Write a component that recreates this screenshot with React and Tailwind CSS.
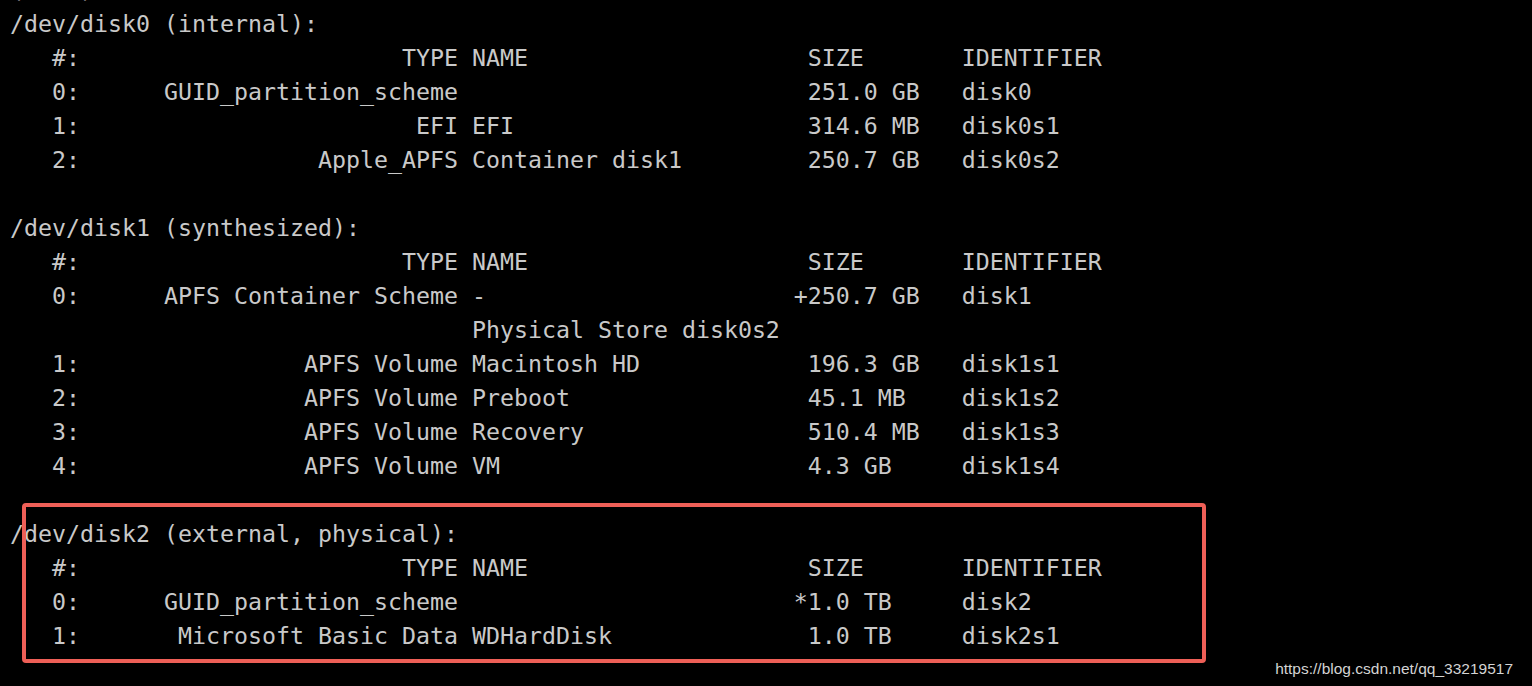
import React from 'react';

const HEAD = '   #:                       TYPE NAME                    SIZE       IDENTIFIER';

// builds one diskutil row on the fixed column grid
const row = (num, type, name, size, id) => {
  const left = ('   ' + num + ':').padEnd(32 - type.length) + type + ' ';
  let s = (left + name).padEnd(56);
  s = s + (size.startsWith('+') || size.startsWith('*') ? size : ' ' + size);
  return s.padEnd(68) + id;
};

const blocks = [
  {
    title: '/dev/disk0 (internal):',
    rows: [
      row(0, 'GUID_partition_scheme', '', '251.0 GB', 'disk0'),
      row(1, 'EFI', 'EFI', '314.6 MB', 'disk0s1'),
      row(2, 'Apple_APFS', 'Container disk1', '250.7 GB', 'disk0s2'),
    ],
  },
  {
    title: '/dev/disk1 (synthesized):',
    rows: [
      row(0, 'APFS Container Scheme', '-', '+250.7 GB', 'disk1'),
      ' '.repeat(33) + 'Physical Store disk0s2',
      row(1, 'APFS Volume', 'Macintosh HD', '196.3 GB', 'disk1s1'),
      row(2, 'APFS Volume', 'Preboot', '45.1 MB', 'disk1s2'),
      row(3, 'APFS Volume', 'Recovery', '510.4 MB', 'disk1s3'),
      row(4, 'APFS Volume', 'VM', '4.3 GB', 'disk1s4'),
    ],
  },
  {
    title: '/dev/disk2 (external, physical):',
    rows: [
      row(0, 'GUID_partition_scheme', '', '*1.0 TB', 'disk2'),
      row(1, 'Microsoft Basic Data', 'WDHardDisk', '1.0 TB', 'disk2s1'),
    ],
  },
];

const Line = ({ children }) => (
  <div className="h-[34px] leading-[34px] whitespace-pre">{children || ' '}</div>
);

export default function App() {
  return (
    <div className="relative w-[1532px] h-[686px] overflow-hidden bg-black">
      <div className="-mt-[27px] pl-[10px] text-[23.25px] text-[#c9c9c9] font-['DejaVu_Sans_Mono',monospace]">
        <Line>(base)</Line>
        {blocks.map((b, i) => (
          <div key={i}>
            {i > 0 && <Line />}
            <Line>{b.title}</Line>
            <Line>{HEAD}</Line>
            {b.rows.map((r, j) => (
              <Line key={j}>{r}</Line>
            ))}
          </div>
        ))}
      </div>

      {/* annotation box */}
      <div className="absolute left-[22px] top-[503px] w-[1184px] h-[160px] border-4 border-[#ee5f57] rounded-[4px]" />

      {/* watermark */}
      <div className="absolute right-[19px] bottom-[10px] leading-none text-[15.5px] text-[#d4d4d4] font-['Liberation_Sans',Arial,sans-serif]">
        https://blog.csdn.net/qq_33219517
      </div>
    </div>
  );
}
